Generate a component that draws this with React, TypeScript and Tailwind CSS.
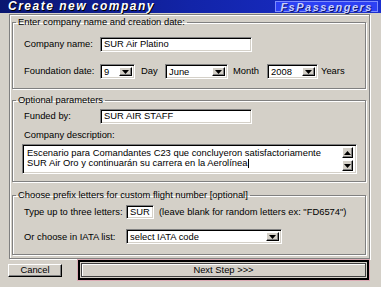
import React from 'react';

const sunken =
  'border border-t-[#808080] border-l-[#808080] border-b-white border-r-white shadow-[inset_1px_1px_0_#000,inset_-1px_-1px_0_#d4d0c8] bg-white';
const raised =
  'border border-t-white border-l-white border-b-black border-r-black shadow-[inset_-1px_-1px_0_#808080] bg-[#d4d0c8]';
const groupBox =
  'border border-[#808080] shadow-[inset_1px_1px_0_#fff,1px_1px_0_#fff] px-[3px]';

function Arrow({ up = false }: { up?: boolean }) {
  return (
    <svg width="7" height="4" viewBox="0 0 7 4">
      <polygon points={up ? '0,4 7,4 3.5,0' : '0,0 7,0 3.5,4'} fill="#000" />
    </svg>
  );
}

function Select({ value, width }: { value: string; width: string }) {
  return (
    <div className={`${sunken} ${width} h-[15px] flex items-stretch p-[2px]`}>
      <span className="flex-1 pl-[1px] leading-[10px] whitespace-nowrap overflow-hidden">{value}</span>
      <div className={`${raised} w-[13px] flex items-center justify-center`}>
        <Arrow />
      </div>
    </div>
  );
}

function TextBox({ value, width, height = 'h-[15px]' }: { value: string; width: string; height?: string }) {
  return (
    <div className={`${sunken} ${width} ${height} flex items-center pl-[3px] whitespace-nowrap overflow-hidden`}>
      {value}
    </div>
  );
}

export default function App() {
  return (
    <div className="w-[381px] h-[287px] bg-[#d4d0c8] flex flex-col text-black text-[9.4px] font-['Liberation_Sans',Arial,sans-serif] whitespace-nowrap">
      {/* title bar */}
      <div className="h-[13px] flex items-stretch justify-between bg-gradient-to-r from-[#0a1670] via-[#1224a8] to-[#1b2fd0]">
        <span className="pl-[8px] text-[12px] leading-[13px] font-bold italic tracking-[1.5px] text-white [text-shadow:1px_1px_0_#000]">
          Create new company
        </span>
        <span className="mr-[3px] mt-[1px] mb-[1px] px-[4px] bg-[#2d40f4] border border-[#7d8cff] text-[11px] leading-[10px] font-bold italic tracking-[1.5px] text-[#c9d0ff] [text-shadow:1px_1px_0_#0a1670]">
          FsPassengers
        </span>
      </div>

      {/* main panel */}
      <div className="ml-[9px] mr-[11px] mt-[1px] h-[245px] border border-[#808080] shadow-[inset_1px_1px_0_#fff,1px_1px_0_#fff] pl-[2px] pr-[3px] flex flex-col">
        <fieldset className={`${groupBox} mt-[1px] pt-[9px] pb-[9px]`}>
          <legend className="px-[2px] leading-[12px]">Enter company name and creation date:</legend>
          <div className="flex items-center pl-[8px]">
            <span className="w-[76px]">Company name:</span>
            <TextBox value="SUR Air Platino" width="w-[152px]" />
          </div>
          <div className="flex items-center pl-[8px] mt-[12px]">
            <span className="w-[76px]">Foundation date:</span>
            <Select value="9" width="w-[35px]" />
            <span className="ml-[6px] w-[24px]">Day</span>
            <Select value="June" width="w-[63px]" />
            <span className="ml-[5px] w-[34px]">Month</span>
            <Select value="2008" width="w-[51px]" />
            <span className="ml-[3px]">Years</span>
          </div>
        </fieldset>

        <fieldset className={`${groupBox} mt-[5px] pt-[3px] pb-[7px]`}>
          <legend className="px-[2px] leading-[12px]">Optional parameters</legend>
          <div className="flex items-center pl-[8px]">
            <span className="w-[76px]">Funded by:</span>
            <TextBox value="SUR AIR STAFF" width="w-[152px]" />
          </div>
          <div className="pl-[8px] mt-[5px] leading-[12px]">Company description:</div>
          <div className={`${sunken} ml-[6px] mt-[3px] w-[335px] h-[30px] flex p-[2px]`}>
            <div className="flex-1 pl-[2px] pt-[1px] leading-[10px]">
              <div>Escenario para Comandantes C23 que concluyeron satisfactoriamente</div>
              <div className="flex items-center">
                SUR Air Oro y continuarán su carrera en la Aerolínea
                <span className="inline-block w-px h-[9px] bg-black ml-[1px]" />
              </div>
            </div>
            <div className="w-[11px] mr-[1px] flex flex-col justify-between">
              <div className={`${raised} h-[11px] flex items-center justify-center`}>
                <Arrow up />
              </div>
              <div className={`${raised} h-[11px] flex items-center justify-center`}>
                <Arrow />
              </div>
            </div>
          </div>
        </fieldset>

        <fieldset className={`${groupBox} mt-[7px] pt-[4px] pb-[10px]`}>
          <legend className="px-[2px] leading-[12px]">Choose prefix letters for custom flight number [optional]</legend>
          <div className="flex items-center pl-[8px]">
            <span className="w-[102px]">Type up to three letters:</span>
            <TextBox value="SUR" width="w-[28px]" height="h-[14px]" />
            <span className="ml-[5px]">(leave blank for random letters ex: "FD6574")</span>
          </div>
          <div className="flex items-center pl-[8px] mt-[10px]">
            <span className="w-[102px]">Or choose in IATA list:</span>
            <Select value="select IATA code" width="w-[156px]" />
          </div>
        </fieldset>
      </div>

      {/* buttons */}
      <div className="flex items-center pl-[8px] pr-[12px] mt-[1px] h-[20px]">
        <button className={`${raised} w-[54px] h-[13px] flex items-center justify-center leading-[10px]`}>
          Cancel
        </button>
        <button className="ml-[16px] flex-1 h-[20px] border-2 border-black ring-1 ring-[#dcaab4] bg-[#d4d0c8] p-[1px] flex">
          <div className="flex-1 border border-[#404040] shadow-[inset_1px_1px_0_#fff] flex items-center justify-center leading-[10px]">
            Next Step &gt;&gt;&gt;
          </div>
        </button>
      </div>
    </div>
  );
}
